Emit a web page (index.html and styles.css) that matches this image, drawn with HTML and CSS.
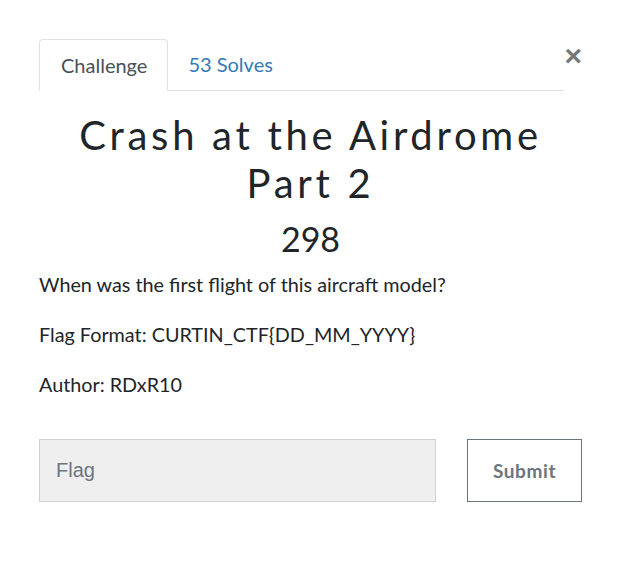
FILE: index.html
```html
<!DOCTYPE html>
<html>
<head>
<meta charset="utf-8">
<link rel="stylesheet" href="styles.css">
</head>
<body>
<div class="modal">
  <button class="close" aria-label="Close">&times;</button>
  <div class="tabs">
    <div class="tab active">Challenge</div>
    <div class="tab link">53 Solves</div>
  </div>
  <h2 class="title">Crash at the Airdrome Part 2</h2>
  <h3 class="value">298</h3>
  <div class="desc">
    <p>When was the first flight of this aircraft model?</p>
    <p>Flag Format: CURTIN_CTF{DD_MM_YYYY}</p>
    <p>Author: RDxR10</p>
  </div>
  <div class="submit-row">
    <input class="flag" type="text" placeholder="Flag">
    <button class="submit">Submit</button>
  </div>
</div>
</body>
</html>
```
FILE: styles.css
```css
html, body {
  margin: 0;
  padding: 0;
  background: #fff;
}
body {
  font-family: Lato, "Noto Sans", sans-serif;
  color: #212529;
}
.modal {
  position: relative;
  padding: 39px 38px 0 39px;
}
.close {
  position: absolute;
  top: 42px;
  right: 38px;
  border: none;
  background: none;
  padding: 0;
  font-family: "Liberation Sans", Arial, sans-serif;
  font-size: 30px;
  font-weight: bold;
  line-height: 28px;
  color: #777;
  cursor: pointer;
}
.tabs {
  display: flex;
  width: 525px;
  border-bottom: 1px solid #dee2e6;
  height: 51px;
}
.tab {
  font-size: 20px;
  padding: 0 20px 0 21px;
  line-height: 50px;
  height: 51px;
  box-sizing: border-box;
}
.tab.active {
  border: 1px solid #dee2e6;
  border-bottom: 1px solid #fff;
  border-radius: 4px 4px 0 0;
  background: #fff;
  color: #495057;
  height: 52px;
  line-height: 50px;
}
.tab.link {
  color: #337ab7;
  padding-left: 20px;
}
.title {
  margin: 20px 0 0;
  text-align: center;
  font-weight: 400;
  font-size: 40px;
  line-height: 48px;
  letter-spacing: 3.7px;
  color: #212529;
  padding: 0 10px;
}
.value {
  margin: 12px 0 0;
  text-align: center;
  font-weight: 400;
  font-size: 34px;
  line-height: 40px;
}
.desc {
  margin-top: 11px;
}
.desc p {
  margin: 0 0 22px;
  font-size: 19.8px;
  line-height: 28px;
}
.submit-row {
  display: flex;
  gap: 31px;
  margin-top: 41px;
}
.flag {
  width: 397px;
  height: 63px;
  box-sizing: border-box;
  background: #efefef;
  border: 1px solid #d0d0d0;
  padding: 0 16px;
  font-family: "Liberation Sans", Arial, sans-serif;
  font-size: 20px;
  color: #495057;
  margin: 0;
}
.flag::placeholder {
  color: #6c757d;
}
.submit {
  width: 115px;
  height: 63px;
  box-sizing: border-box;
  background: #fff;
  border: 1px solid #6c757d;
  font-family: Lato, sans-serif;
  font-weight: bold;
  font-size: 19px;
  color: #6c757d;
  letter-spacing: 0.6px;
  margin: 0;
}
```
